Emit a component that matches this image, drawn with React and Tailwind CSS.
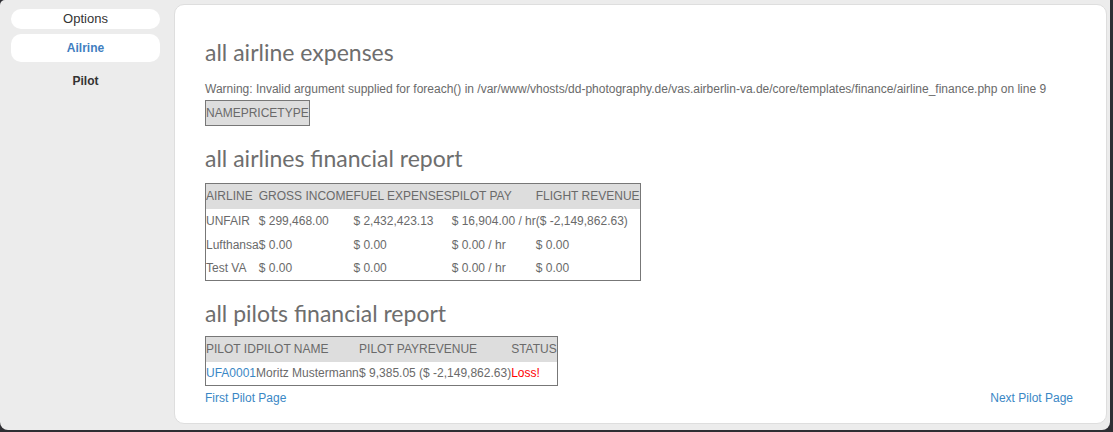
import React from 'react';

const airlines = [
    { name: 'UNFAIR', gross: '$ 299,468.00', fuel: '$ 2,432,423.13', pay: '$ 16,904.00 / hr', rev: '($ -2,149,862.63)' },
    { name: 'Lufthansa', gross: '$ 0.00', fuel: '$ 0.00', pay: '$ 0.00 / hr', rev: '$ 0.00' },
    { name: 'Test VA', gross: '$ 0.00', fuel: '$ 0.00', pay: '$ 0.00 / hr', rev: '$ 0.00' },
];

const heading = "text-[23px] leading-[23px] text-[#6e6e6e] font-['Lato',sans-serif]";
const th = 'p-0 h-[25px] text-left font-normal whitespace-nowrap';
const td = 'p-0 whitespace-nowrap';

const App = () => {
    return (
        <div className="w-[1113px] h-[432px] bg-[#2e2e33] pr-[3px] pb-[2px] font-['Liberation_Sans',Arial,sans-serif]">
            <div className="flex h-full bg-[#ececec] rounded-tl-[5px] rounded-bl-[8px] rounded-br-[8px]">
                <aside className="w-[174px] shrink-0 pl-[11px] pr-[14px] pt-[9px] text-[13px]">
                    <div className="h-5 bg-white rounded-full flex items-center justify-center text-[#333]">Options</div>
                    <div className="mt-[5px] h-7 bg-white rounded-[10px] flex items-center justify-center text-[#3f7ec0] font-bold text-[12px]">Ailrine</div>
                    <div className="mt-[10px] text-center text-[#333] font-bold text-[12px]">Pilot</div>
                </aside>

                <main className="flex-1 mt-1 mb-[6px] mr-[3px] bg-white border border-[#dedede] rounded-[10px] pl-[30px] pr-[33px] pt-[36px] text-[12px] text-[#6a6a6a]">
                    <h1 className={heading}>all airline expenses</h1>
                    <p className="mt-[19px] leading-none">Warning: Invalid argument supplied for foreach() in /var/www/vhosts/dd-photography.de/vas.airberlin-va.de/core/templates/finance/airline_finance.php on line 9</p>
                    <table className="mt-[5px] border border-[#777] border-collapse bg-[#dddddd]">
                        <thead>
                            <tr>
                                <th className={th}>NAME</th>
                                <th className={th}>PRICE</th>
                                <th className={th}>TYPE</th>
                            </tr>
                        </thead>
                    </table>

                    <h1 className={`${heading} mt-[21px]`}>all airlines financial report</h1>
                    <table className="mt-[13px] border border-[#777] border-collapse">
                        <thead>
                            <tr className="bg-[#dddddd]">
                                <th className={th}>AIRLINE</th>
                                <th className={th}>GROSS INCOME</th>
                                <th className={th}>FUEL EXPENSES</th>
                                <th className={th}>PILOT PAY</th>
                                <th className={th}>FLIGHT REVENUE</th>
                            </tr>
                        </thead>
                        <tbody>
                            {airlines.map((a) => (
                                <tr key={a.name} className="h-6">
                                    <td className={td}>{a.name}</td>
                                    <td className={td}>{a.gross}</td>
                                    <td className={td}>{a.fuel}</td>
                                    <td className={td}>{a.pay}</td>
                                    <td className={td}>{a.rev}</td>
                                </tr>
                            ))}
                        </tbody>
                    </table>

                    <h1 className={`${heading} mt-[21px]`}>all pilots financial report</h1>
                    <table className="mt-[11px] border border-[#777] border-collapse">
                        <thead>
                            <tr className="bg-[#dddddd]">
                                <th className={th}>PILOT ID</th>
                                <th className={`${th} w-[103px]`}>PILOT NAME</th>
                                <th className={th}>PILOT PAY</th>
                                <th className={`${th} w-[87px]`}>REVENUE</th>
                                <th className={th}>STATUS</th>
                            </tr>
                        </thead>
                        <tbody>
                            <tr className="h-6">
                                <td className={`${td} text-[#3a87c5]`}>UFA0001</td>
                                <td className={td}>Moritz Mustermann</td>
                                <td className={td}>$ 9,385.05</td>
                                <td className={td}>($ -2,149,862.63)</td>
                                <td className={`${td} text-[#ff0000]`}>Loss!</td>
                            </tr>
                        </tbody>
                    </table>

                    <div className="mt-[6px] leading-none flex justify-between text-[#3a87c5]">
                        <a href="#">First Pilot Page</a>
                        <a href="#">Next Pilot Page</a>
                    </div>
                </main>
            </div>
        </div>
    );
};

export default App;
